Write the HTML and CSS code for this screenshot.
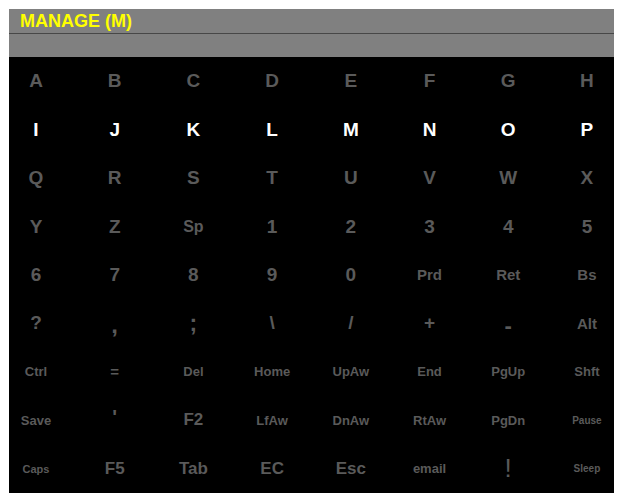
FILE: index.html
```html
<!DOCTYPE html>
<html lang="en">
<head>
    <meta charset="UTF-8">
    <title>Manage (M)</title>
    <link rel="stylesheet" href="styles.css">
</head>
<body>
    <div class="panel">
        <div class="header">
            <div class="title">MANAGE (M)</div>
            <div class="subbar"></div>
        </div>
        <div class="keys">
            <div class="row">
                <span class="key">A</span><span class="key">B</span><span class="key">C</span><span class="key">D</span>
                <span class="key">E</span><span class="key">F</span><span class="key">G</span><span class="key">H</span>
            </div>
            <div class="row active">
                <span class="key">I</span><span class="key">J</span><span class="key">K</span><span class="key">L</span>
                <span class="key">M</span><span class="key">N</span><span class="key">O</span><span class="key">P</span>
            </div>
            <div class="row">
                <span class="key">Q</span><span class="key">R</span><span class="key">S</span><span class="key">T</span>
                <span class="key">U</span><span class="key">V</span><span class="key">W</span><span class="key">X</span>
            </div>
            <div class="row">
                <span class="key">Y</span><span class="key">Z</span><span class="key md">Sp</span><span class="key">1</span>
                <span class="key">2</span><span class="key">3</span><span class="key">4</span><span class="key">5</span>
            </div>
            <div class="row">
                <span class="key">6</span><span class="key">7</span><span class="key">8</span><span class="key">9</span>
                <span class="key">0</span><span class="key sm">Prd</span><span class="key sm">Ret</span><span class="key sm">Bs</span>
            </div>
            <div class="row">
                <span class="key">?</span><span class="key comma">,</span><span class="key semi">;</span><span class="key">\</span>
                <span class="key">/</span><span class="key">+</span><span class="key dash">-</span><span class="key sm">Alt</span>
            </div>
            <div class="row">
                <span class="key xs">Ctrl</span><span class="key eq">=</span><span class="key xs">Del</span><span class="key xs">Home</span>
                <span class="key xs">UpAw</span><span class="key xs">End</span><span class="key xs">PgUp</span><span class="key xs">Shft</span>
            </div>
            <div class="row">
                <span class="key xs">Save</span><span class="key quote">'</span><span class="key lg">F2</span><span class="key xs">LfAw</span>
                <span class="key xs">DnAw</span><span class="key xs">RtAw</span><span class="key xs">PgDn</span><span class="key tiny">Pause</span>
            </div>
            <div class="row">
                <span class="key caps">Caps</span><span class="key lg">F5</span><span class="key lg">Tab</span><span class="key lg">EC</span>
                <span class="key lg">Esc</span><span class="key xs">email</span><span class="key bang">!</span><span class="key tiny">Sleep</span>
            </div>
        </div>
    </div>
</body>
</html>
```

FILE: styles.css
```css
body {
    margin: 0;
    background: #fff;
    font-family: "Liberation Sans", Arial, sans-serif;
}

.panel {
    margin: 9px 10px 0 9px;
    width: 605px;
}

.header {
    background: #808080;
}

.title {
    height: 24px;
    line-height: 24px;
    padding-left: 11px;
    font-size: 18px;
    font-weight: bold;
    color: #ffff00;
    border-bottom: 1px solid #474747;
}

.subbar {
    height: 23px;
}

.keys {
    background: #000;
    height: 436px;
    display: grid;
    grid-template-rows: repeat(9, 1fr);
}

.row {
    display: flex;
    justify-content: space-between;
    align-items: center;
}

.key {
    width: 54px;
    text-align: center;
    font-size: 19px;
    font-weight: bold;
    color: #5a5a5a;
}

.row.active .key {
    color: #fff;
}

.key.lg {
    font-size: 17px;
}

.key.md {
    font-size: 16px;
}

.key.sm {
    font-size: 15px;
}

.key.xs {
    font-size: 13px;
}

.key.caps {
    font-size: 11px;
}

.key.tiny {
    font-size: 10px;
}

.key.eq {
    font-size: 15px;
}

.key.comma {
    font-size: 24px;
    margin-top: 4px;
}

.key.semi {
    font-size: 23px;
}

.key.dash {
    font-size: 22px;
    margin-top: 6px;
}

.key.quote {
    font-size: 20px;
    margin-top: -6px;
}

.key.bang {
    font-size: 26px;
    font-weight: normal;
}
```
